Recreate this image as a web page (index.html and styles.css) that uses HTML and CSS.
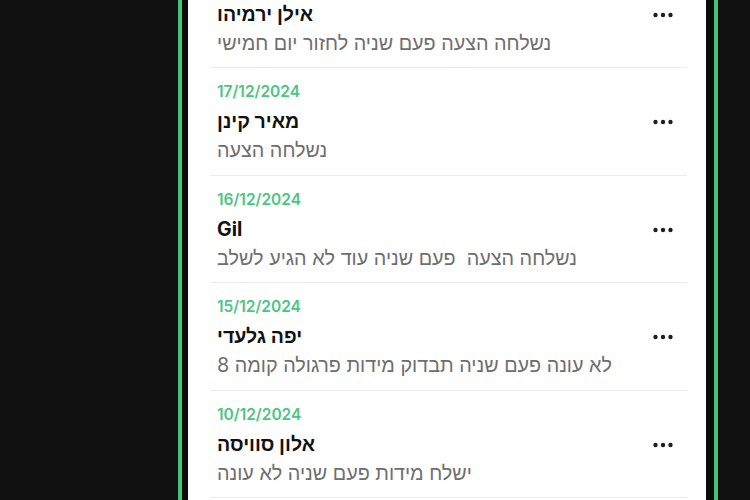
FILE: index.html
```html
<!DOCTYPE html>
<html lang="he">
<head>
    <meta charset="UTF-8">
    <meta name="viewport" content="width=device-width, initial-scale=1.0">
    <title>לקוחות</title>
    <link rel="stylesheet" href="styles.css">
</head>
<body>
    <div class="frame">
        <div class="panel">
            <ul class="leads">
                <li class="lead">
                    <div class="lead-info">
                        <div class="date">18/12/2024</div>
                        <div class="name"><span>אילן</span> <span>ירמיהו</span></div>
                        <div class="note"><span>נשלחה</span> <span>הצעה</span> <span>פעם</span> <span>שניה</span> <span>לחזור</span> <span>יום</span> <span>חמישי</span></div>
                    </div>
                    <button class="more"><svg width="20" height="6" viewBox="0 0 20 6"><circle cx="2.5" cy="3" r="2.2"/><circle cx="10" cy="3" r="2.2"/><circle cx="17.5" cy="3" r="2.2"/></svg></button>
                </li>
                <li class="lead">
                    <div class="lead-info">
                        <div class="date">17/12/2024</div>
                        <div class="name"><span>מאיר</span> <span>קינן</span></div>
                        <div class="note"><span>נשלחה</span> <span>הצעה</span></div>
                    </div>
                    <button class="more"><svg width="20" height="6" viewBox="0 0 20 6"><circle cx="2.5" cy="3" r="2.2"/><circle cx="10" cy="3" r="2.2"/><circle cx="17.5" cy="3" r="2.2"/></svg></button>
                </li>
                <li class="lead">
                    <div class="lead-info">
                        <div class="date">16/12/2024</div>
                        <div class="name"><span>Gil</span></div>
                        <div class="note"><span>נשלחה</span> <span>הצעה</span>  <span>פעם</span> <span>שניה</span> <span>עוד</span> <span>לא</span> <span>הגיע</span> <span>לשלב</span></div>
                    </div>
                    <button class="more"><svg width="20" height="6" viewBox="0 0 20 6"><circle cx="2.5" cy="3" r="2.2"/><circle cx="10" cy="3" r="2.2"/><circle cx="17.5" cy="3" r="2.2"/></svg></button>
                </li>
                <li class="lead">
                    <div class="lead-info">
                        <div class="date">15/12/2024</div>
                        <div class="name"><span>יפה</span> <span>גלעדי</span></div>
                        <div class="note"><span>לא</span> <span>עונה</span> <span>פעם</span> <span>שניה</span> <span>תבדוק</span> <span>מידות</span> <span>פרגולה</span> <span>קומה</span> <span>8</span></div>
                    </div>
                    <button class="more"><svg width="20" height="6" viewBox="0 0 20 6"><circle cx="2.5" cy="3" r="2.2"/><circle cx="10" cy="3" r="2.2"/><circle cx="17.5" cy="3" r="2.2"/></svg></button>
                </li>
                <li class="lead">
                    <div class="lead-info">
                        <div class="date">10/12/2024</div>
                        <div class="name"><span>אלון</span> <span>סוויסה</span></div>
                        <div class="note"><span>ישלח</span> <span>מידות</span> <span>פעם</span> <span>שניה</span> <span>לא</span> <span>עונה</span></div>
                    </div>
                    <button class="more"><svg width="20" height="6" viewBox="0 0 20 6"><circle cx="2.5" cy="3" r="2.2"/><circle cx="10" cy="3" r="2.2"/><circle cx="17.5" cy="3" r="2.2"/></svg></button>
                </li>
            </ul>
        </div>
    </div>
</body>
</html>
```

FILE: styles.css
```css
html, body {
    height: 100%;
}

body {
    margin: 0;
    background-color: #111;
    font-family: Inter, 'Liberation Sans', sans-serif;
    overflow: hidden;
}

.frame {
    margin-left: 178px;
    width: 518px;
    height: 100%;
    border-left: 4px solid #46c47f;
    border-right: 4px solid #46c47f;
    background-color: #0c0c0c;
    padding: 0 8px 0 6px;
}

.panel {
    height: 100%;
    background-color: #fff;
    overflow: hidden;
}

.leads {
    list-style: none;
    margin: -39.5px 0 0 0;
    padding: 0 19px 0 22px;
}

.lead {
    display: flex;
    align-items: flex-start;
    padding: 14px 7px 9px 7px;
    border-bottom: 1px solid #ececec;
    height: 83.5px;
}

.lead-info {
    flex: 1;
}

.date {
    color: #4cc584;
    font-size: 15.5px;
    font-weight: 600;
    line-height: 20px;
}

.name,
.note {
    direction: rtl;
    text-align: left;
}

.name {
    margin-top: 5px;
    color: #111;
    font-size: 19.5px;
    font-weight: 700;
    line-height: 28px;
}

.note {
    color: #6e6e6e;
    font-size: 19.75px;
    line-height: 30px;
    white-space: pre-wrap;
}

.more {
    margin-top: 37px;
    margin-right: 7px;
    padding: 0;
    border: none;
    background: none;
    line-height: 0;
    cursor: pointer;
}

.more svg {
    fill: #1e1e1e;
}
```
